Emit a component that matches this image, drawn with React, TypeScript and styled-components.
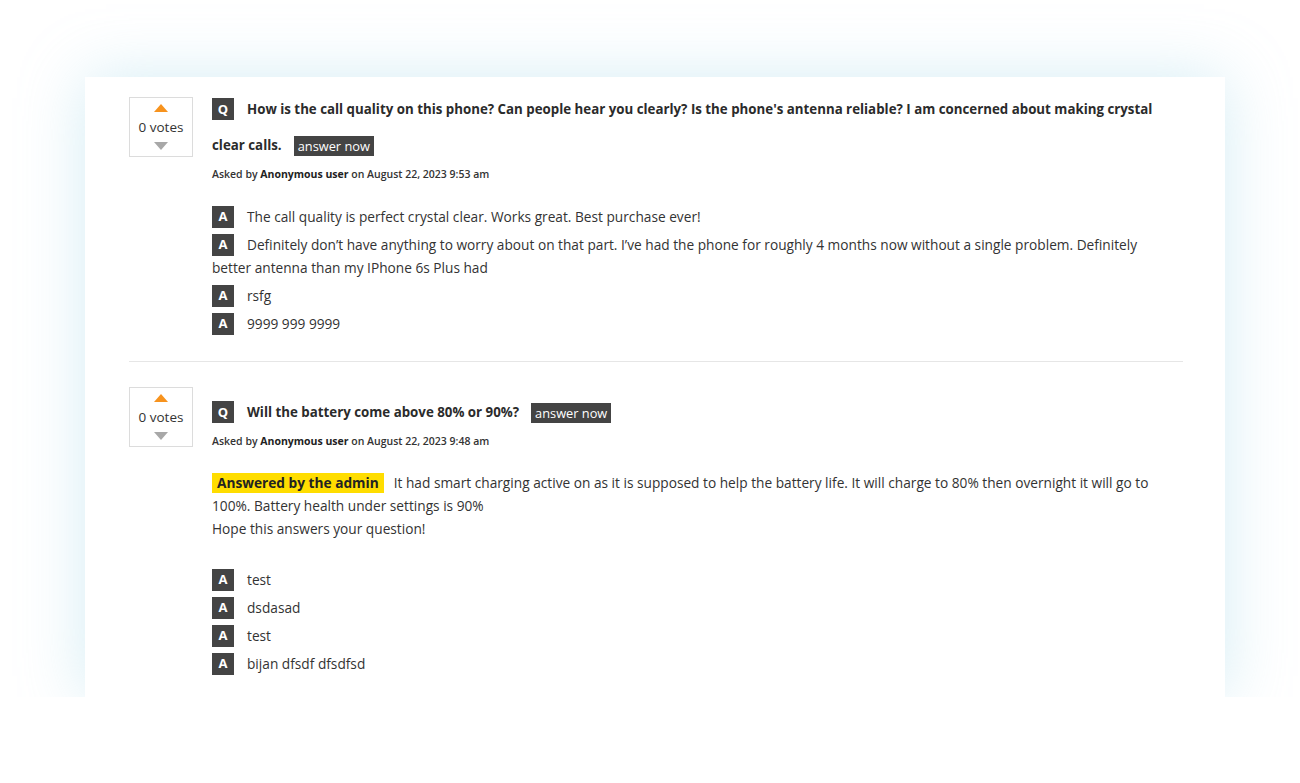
import styled, { createGlobalStyle } from 'styled-components';

const GlobalStyle = createGlobalStyle`
    body{
        margin: 0;
        background: #fff;
        font-family: "Open Sans", "Liberation Sans", sans-serif;
        color: #333;
    }
`;

interface Question {
    title: string;
    askedOn: string;
    adminAnswer?: string[];
    answers: string[];
}

const questions: Question[] = [
    {
        title: "How is the call quality on this phone? Can people hear you clearly? Is the phone's antenna reliable? I am concerned about making crystal clear calls.",
        askedOn: "August 22, 2023 9:53 am",
        answers: [
            "The call quality is perfect crystal clear. Works great. Best purchase ever!",
            "Definitely don’t have anything to worry about on that part. I’ve had the phone for roughly 4 months now without a single problem. Definitely better antenna than my IPhone 6s Plus had",
            "rsfg",
            "9999 999 9999",
        ],
    },
    {
        title: "Will the battery come above 80% or 90%?",
        askedOn: "August 22, 2023 9:48 am",
        adminAnswer: [
            "It had smart charging active on as it is supposed to help the battery life. It will charge to 80% then overnight it will go to 100%. Battery health under settings is 90%",
            "Hope this answers your question!",
        ],
        answers: ["test", "dsdasad", "test", "bijan dfsdf dfsdfsd"],
    },
];

function App() {
    return (
        <>
            <GlobalStyle />
            <Card>
                {questions.map((q, i) => (
                    <QuestionRow key={i} $first={i === 0}>
                        <VoteBox $first={i === 0}>
                            <Arrow $dir="up" />
                            <span>0 votes</span>
                            <Arrow $dir="down" />
                        </VoteBox>
                        <Content $first={i === 0}>
                            <Title>
                                <Badge>Q</Badge>
                                {q.title}
                                <AnswerNow>answer now</AnswerNow>
                            </Title>
                            <Meta>
                                Asked by <b>Anonymous user</b> on {q.askedOn}
                            </Meta>
                            {q.adminAnswer && (
                                <AdminAnswer>
                                    <p>
                                        <AdminLabel>Answered by the admin</AdminLabel>
                                        {q.adminAnswer[0]}
                                    </p>
                                    <p>{q.adminAnswer[1]}</p>
                                </AdminAnswer>
                            )}
                            <AnswerList $gap={q.adminAnswer ? 28 : 21}>
                                {q.answers.map((a, j) => (
                                    <Answer key={j}>
                                        <AnswerBadge>A</AnswerBadge>
                                        {a}
                                    </Answer>
                                ))}
                            </AnswerList>
                        </Content>
                    </QuestionRow>
                ))}
            </Card>
        </>
    );
}

const Card = styled.div`
    width: 1140px;
    box-sizing: border-box;
    margin: 77px 0 0 85px;
    padding: 14px 42px 22px 44px;
    background: #fff;
    box-shadow: 0 0 60px rgba(150, 210, 230, 0.4);
`;

const QuestionRow = styled.div<{ $first: boolean }>`
    display: flex;
    align-items: flex-start;
    gap: 19px;
    padding: ${({ $first }) => ($first ? '0 0 26px' : '25px 0 0')};
    border-bottom: ${({ $first }) => ($first ? '1px solid #e6e6e6' : 'none')};
`;

const VoteBox = styled.div<{ $first: boolean }>`
    flex: none;
    width: 64px;
    height: 60px;
    box-sizing: border-box;
    margin-top: ${({ $first }) => ($first ? '6px' : '0')};
    border: 1px solid #dcdcdc;
    display: flex;
    flex-direction: column;
    align-items: center;
    justify-content: center;
    gap: 6px;
    font-size: 13.5px;
    color: #333;
`;

const Arrow = styled.i<{ $dir: 'up' | 'down' }>`
    width: 0;
    height: 0;
    border-left: 7px solid transparent;
    border-right: 7px solid transparent;
    ${({ $dir }) =>
        $dir === 'up'
            ? 'border-bottom: 8px solid #f7931e;'
            : 'border-top: 8px solid #a8a8a8;'}
`;

const Content = styled.div<{ $first: boolean }>`
    flex: 1;
    max-width: 960px;
    margin-top: ${({ $first }) => ($first ? '0' : '7px')};
`;

const Badge = styled.span`
    display: inline-flex;
    align-items: center;
    justify-content: center;
    width: 22px;
    height: 22px;
    margin-right: 13px;
    vertical-align: middle;
    position: relative;
    top: -1px;
    background: #444;
    color: #fff;
    font-size: 13px;
    font-weight: 700;
    line-height: 1;
`;

const AnswerBadge = styled(Badge)`
    vertical-align: top;
    top: 0.5px;
`;

const Title = styled.h3`
    margin: 0;
    font-size: 13.3px;
    font-weight: 700;
    line-height: 36px;
    color: #2b2b2b;
`;

const AnswerNow = styled.span`
    display: inline-block;
    margin-left: 12px;
    padding: 0 4px;
    height: 20px;
    line-height: 20px;
    vertical-align: middle;
    background: #444;
    color: #fff;
    font-size: 12.8px;
    font-weight: 400;
`;

const Meta = styled.div`
    margin-top: 1px;
    font-size: 10.5px;
    font-weight: 600;
    line-height: 20px;
    color: #333;
    b{
        font-weight: 700;
        color: #222;
    }
`;

const AdminAnswer = styled.div`
    margin-top: 20px;
    font-size: 13.7px;
    line-height: 23px;
    color: #333;
    p{
        margin: 0;
    }
`;

const AdminLabel = styled.span`
    display: inline-block;
    margin-right: 10px;
    padding: 0 5px;
    line-height: 20px;
    background: #ffdd00;
    color: #222;
    font-weight: 700;
`;

const AnswerList = styled.div<{ $gap: number }>`
    margin-top: ${({ $gap }) => $gap}px;
    display: flex;
    flex-direction: column;
    gap: 5px;
`;

const Answer = styled.div`
    font-size: 13.7px;
    line-height: 23px;
    color: #333;
`;

export default App;
